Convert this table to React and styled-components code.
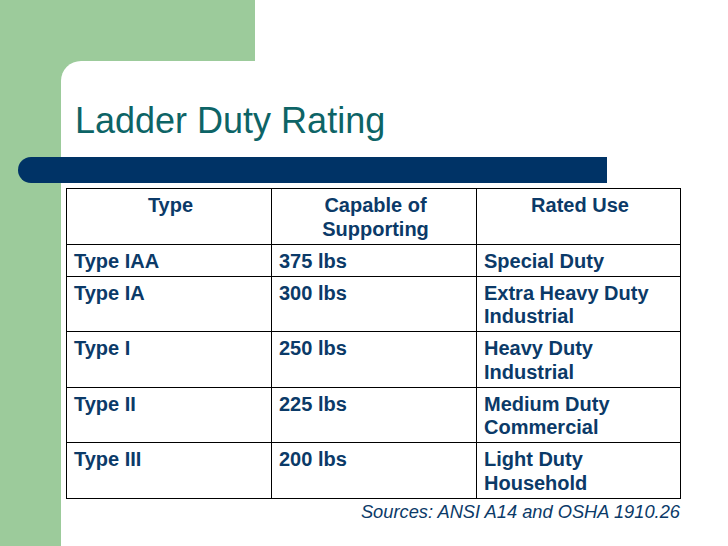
import React from "react";
import styled, { createGlobalStyle } from "styled-components";

const Global = createGlobalStyle`
  html, body { margin: 0; padding: 0; background: #ffffff; }
  body { font-family: "Liberation Sans", Arial, sans-serif; }
`;

const GREEN = "#9ccb9b";
const NAVY = "#003366";
const INK = "#0b3a68";

const Page = styled.div`
  width: 728px;
  height: 546px;
  display: flex;
  flex-direction: column;
  overflow: hidden;
  background: #ffffff;
`;

const TopBand = styled.div`
  height: 61px;
  display: flex;
  flex-shrink: 0;
`;

const GreenTab = styled.div`
  width: 255px;
  background: ${GREEN};
`;

const Main = styled.div`
  flex: 1;
  display: flex;
  padding-left: 61px;
  background: ${GREEN};
`;

const Card = styled.div`
  flex: 1;
  background: #ffffff;
  border-top-left-radius: 20px;
  display: flex;
  flex-direction: column;
  padding-left: 5px;
`;

const Title = styled.h1`
  margin: 40px 0 0 9px;
  font-family: "Liberation Sans", Arial, sans-serif;
  font-weight: normal;
  font-size: 36px;
  line-height: 40px;
  color: #0d6466;
`;

const Bar = styled.div`
  margin: 16px 0 0 -48px;
  width: 589px;
  height: 26px;
  background: ${NAVY};
  border-radius: 13px 0 0 13px;
`;

const Table = styled.table`
  margin-top: 5px;
  width: 614px;
  border-collapse: collapse;
  table-layout: fixed;
  font-family: "Liberation Sans", Arial, sans-serif;
  font-weight: bold;
  font-size: 20px;
  line-height: 23.5px;
  color: ${INK};
`;

const Cell = styled.td`
  border: 1px solid #000000;
  padding: 5px 4px 2.5px 7px;
  vertical-align: top;
  white-space: nowrap;
  text-align: ${(p) => (p.$head ? "center" : "left")};
`;

const Note = styled.div`
  width: 614px;
  margin-top: 3px;
  text-align: right;
  font-family: "Liberation Sans", Arial, sans-serif;
  font-style: italic;
  font-size: 18.3px;
  line-height: 20px;
  color: ${INK};
`;

const header = [["Type"], ["Capable of", "Supporting"], ["Rated Use"]];
const rows = [
  [["Type IAA"], ["375 lbs"], ["Special Duty"]],
  [["Type IA"], ["300 lbs"], ["Extra Heavy Duty", "Industrial"]],
  [["Type I"], ["250 lbs"], ["Heavy Duty", "Industrial"]],
  [["Type II"], ["225 lbs"], ["Medium Duty", "Commercial"]],
  [["Type III"], ["200 lbs"], ["Light Duty", "Household"]],
];

const Lines = ({ lines }) =>
  lines.map((l, i) => (
    <React.Fragment key={i}>
      {i > 0 && <br />}
      {l}
    </React.Fragment>
  ));

export default function App() {
  return (
    <Page>
      <Global />
      <TopBand>
        <GreenTab />
      </TopBand>
      <Main>
        <Card>
          <Title>Ladder Duty Rating</Title>
          <Bar />
          <Table>
            <colgroup>
              <col style={{ width: 205 }} />
              <col style={{ width: 205 }} />
              <col style={{ width: 204 }} />
            </colgroup>
            <thead>
              <tr>
                {header.map((h, i) => (
                  <Cell as="th" $head key={i}>
                    <Lines lines={h} />
                  </Cell>
                ))}
              </tr>
            </thead>
            <tbody>
              {rows.map((r, ri) => (
                <tr key={ri}>
                  {r.map((c, ci) => (
                    <Cell key={ci}>
                      <Lines lines={c} />
                    </Cell>
                  ))}
                </tr>
              ))}
            </tbody>
          </Table>
          <Note>Sources: ANSI A14 and OSHA 1910.26</Note>
        </Card>
      </Main>
    </Page>
  );
}
